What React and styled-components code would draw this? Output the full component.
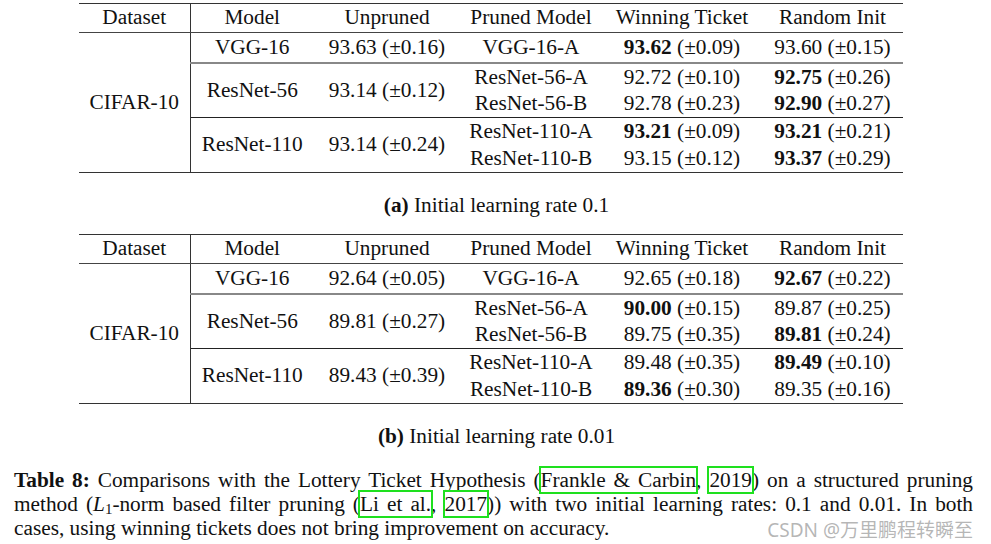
import React from 'react';
import styled, { createGlobalStyle } from 'styled-components';

const GlobalStyle = createGlobalStyle`
  html, body {
    margin: 0;
    padding: 0;
    background: #fff;
  }
  body {
    font-family: "Liberation Serif", "Times New Roman", serif;
    color: #111;
  }
`;

const cols = [111, 124, 146, 142, 160, 141];
const groupRowHeights = [29, 26.5, 27];

const tables = [
  {
    caption: 'Initial learning rate 0.1',
    label: '(a)',
    groups: [
      { model: 'VGG-16', unpruned: '93.63 (±0.16)', rows: [
        { name: 'VGG-16-A', win: ['93.62', '(±0.09)', true], rand: ['93.60', '(±0.15)', false] },
      ] },
      { model: 'ResNet-56', unpruned: '93.14 (±0.12)', rows: [
        { name: 'ResNet-56-A', win: ['92.72', '(±0.10)', false], rand: ['92.75', '(±0.26)', true] },
        { name: 'ResNet-56-B', win: ['92.78', '(±0.23)', false], rand: ['92.90', '(±0.27)', true] },
      ] },
      { model: 'ResNet-110', unpruned: '93.14 (±0.24)', rows: [
        { name: 'ResNet-110-A', win: ['93.21', '(±0.09)', true], rand: ['93.21', '(±0.21)', true] },
        { name: 'ResNet-110-B', win: ['93.15', '(±0.12)', false], rand: ['93.37', '(±0.29)', true] },
      ] },
    ],
  },
  {
    caption: 'Initial learning rate 0.01',
    label: '(b)',
    groups: [
      { model: 'VGG-16', unpruned: '92.64 (±0.05)', rows: [
        { name: 'VGG-16-A', win: ['92.65', '(±0.18)', false], rand: ['92.67', '(±0.22)', true] },
      ] },
      { model: 'ResNet-56', unpruned: '89.81 (±0.27)', rows: [
        { name: 'ResNet-56-A', win: ['90.00', '(±0.15)', true], rand: ['89.87', '(±0.25)', false] },
        { name: 'ResNet-56-B', win: ['89.75', '(±0.35)', false], rand: ['89.81', '(±0.24)', true] },
      ] },
      { model: 'ResNet-110', unpruned: '89.43 (±0.39)', rows: [
        { name: 'ResNet-110-A', win: ['89.48', '(±0.35)', false], rand: ['89.49', '(±0.10)', true] },
        { name: 'ResNet-110-B', win: ['89.36', '(±0.30)', true], rand: ['89.35', '(±0.16)', false] },
      ] },
    ],
  },
];

const Page = styled.div`
  width: 991px;
  padding-top: 3px;
`;

const Table = styled.table`
  margin-left: 79px;
  border-collapse: collapse;
  table-layout: fixed;
  width: 824px;
  font-size: 21.3px;
  border-top: 1.5px solid #333;
  border-bottom: 1.5px solid #333;
`;

const HeadCell = styled.th`
  font-weight: normal;
  height: 28px;
  padding: 0;
  line-height: 1;
  text-align: center;
  vertical-align: middle;
  white-space: nowrap;
  border-bottom: 1.5px solid #444;
  border-right: ${p => (p.$divider ? '1.5px solid #333' : 'none')};
`;

const Cell = styled.td`
  height: ${p => p.$h}px;
  padding: 0;
  line-height: 1;
  text-align: center;
  vertical-align: middle;
  white-space: nowrap;
  border-right: ${p => (p.$divider ? '1.5px solid #333' : 'none')};
  border-bottom: ${p =>
    p.$rule === 'gray' ? '2px solid #888' : p.$rule === 'dark' ? '1px solid #222' : 'none'};
`;

const Caption = styled.div`
  text-align: center;
  font-size: 21.3px;
  line-height: 24px;
  height: 24px;
  margin: 20px 0 ${p => p.$after}px;
  padding-left: 2px;
  b { font-weight: bold; }
`;

const Paragraph = styled.p`
  position: relative;
  margin: 0;
  padding: 0 18px 0 14px;
  font-size: 21.3px;
  line-height: 24px;
  text-align: justify;
  b { font-weight: bold; }
`;

const Cite = styled.span`
  outline: 2px solid #1ee01e;
  outline-offset: 0px;
`;

const Sub = styled.sub`
  font-size: 0.7em;
  vertical-align: -0.2em;
  line-height: 0;
`;

const Watermark = styled.span`
  position: absolute;
  right: 18px;
  bottom: -2px;
  font-family: "Noto Sans", "Noto Sans CJK SC", sans-serif;
  font-size: 19px;
  line-height: 24px;
  color: rgba(150, 150, 150, 0.7);
  white-space: nowrap;
`;

const Score = ({ value }) => (
  <>
    {value[2] ? <b>{value[0]}</b> : value[0]} {value[1]}
  </>
);

const ResultTable = ({ groups }) => (
  <Table>
    <colgroup>
      {cols.map((w, i) => <col key={i} style={{ width: w }} />)}
    </colgroup>
    <thead>
      <tr>
        <HeadCell $divider>Dataset</HeadCell>
        <HeadCell>Model</HeadCell>
        <HeadCell>Unpruned</HeadCell>
        <HeadCell>Pruned Model</HeadCell>
        <HeadCell>Winning Ticket</HeadCell>
        <HeadCell>Random Init</HeadCell>
      </tr>
    </thead>
    <tbody>
      {groups.map((g, gi) => {
        const rule = gi === 0 ? 'gray' : gi === 1 ? 'dark' : null;
        const h = groupRowHeights[gi];
        return g.rows.map((r, ri) => {
          const last = ri === g.rows.length - 1;
          return (
            <tr key={`${gi}-${ri}`}>
              {gi === 0 && ri === 0 && <Cell $h={h} $divider rowSpan={5}>CIFAR-10</Cell>}
              {ri === 0 && <Cell $h={h} rowSpan={g.rows.length} $rule={rule}>{g.model}</Cell>}
              {ri === 0 && <Cell $h={h} rowSpan={g.rows.length} $rule={rule}>{g.unpruned}</Cell>}
              <Cell $h={h} $rule={last ? rule : null}>{r.name}</Cell>
              <Cell $h={h} $rule={last ? rule : null}><Score value={r.win} /></Cell>
              <Cell $h={h} $rule={last ? rule : null}><Score value={r.rand} /></Cell>
            </tr>
          );
        });
      })}
    </tbody>
  </Table>
);

export default function App() {
  return (
    <Page>
      <GlobalStyle />
      {tables.map((t, i) => (
        <React.Fragment key={t.label}>
          <ResultTable groups={t.groups} />
          <Caption $after={i === 0 ? 17 : 20}><b>{t.label}</b> {t.caption}</Caption>
        </React.Fragment>
      ))}
      <Paragraph>
        <b>Table 8:</b> Comparisons with the Lottery Ticket Hypothesis (<Cite>Frankle &amp; Carbin</Cite>, <Cite>2019</Cite>) on a structured pruning
        method (<i>L</i><Sub>1</Sub>-norm based filter pruning (<Cite>Li et al.</Cite>, <Cite>2017</Cite>)) with two initial learning rates: 0.1 and 0.01. In both
        cases, using winning tickets does not bring improvement on accuracy.
        <Watermark>CSDN @万里鹏程转瞬至</Watermark>
      </Paragraph>
    </Page>
  );
}
